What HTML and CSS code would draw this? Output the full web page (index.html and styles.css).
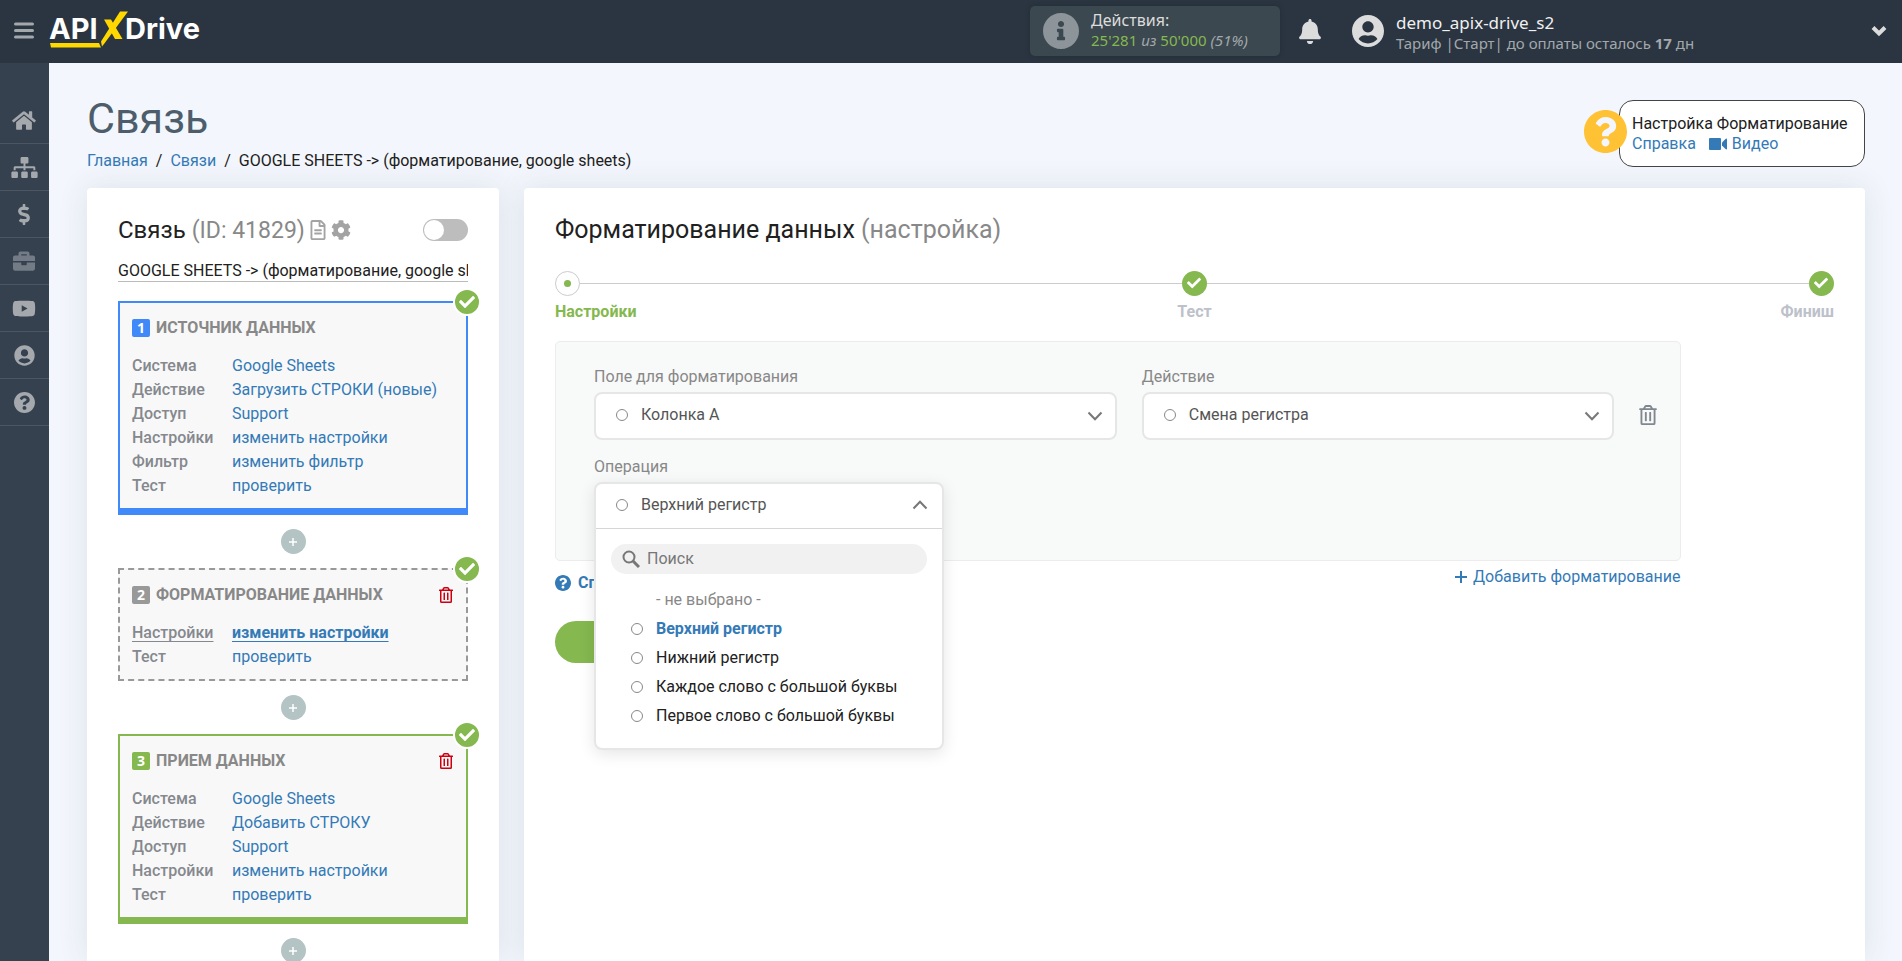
FILE: index.html
```html
<!DOCTYPE html>
<html lang="ru">
<head>
<meta charset="utf-8">
<meta name="viewport" content="width=device-width, initial-scale=1">
<title>Связь</title>
<link rel="stylesheet" href="styles.css">
</head>
<body>
<svg class="sprite" aria-hidden="true">
  <symbol id="i-user" viewBox="0 0 496 512"><path d="M248 8C111 8 0 119 0 256s111 248 248 248 248-111 248-248S385 8 248 8zm0 96c48.600 0 88 39.400 88 88s-39.400 88-88 88-88-39.400-88-88 39.400-88 88-88zm0 344c-58.700 0-111.300-26.600-146.500-68.200 18.800-35.400 55.600-59.800 98.500-59.800 2.400 0 4.800.4 7.100 1.100 13 4.200 26.600 6.900 40.900 6.900 14.300 0 28-2.700 40.900-6.900 2.300-.7 4.700-1.100 7.100-1.100 42.900 0 79.700 24.400 98.500 59.800C359.300 421.400 306.700 448 248 448z"/></symbol>
  <symbol id="i-question" viewBox="8 8 496 496"><path d="M504 256c0 136.997-111.043 248-248 248S8 392.997 8 256C8 119.083 119.043 8 256 8s248 111.083 248 248zM262.655 90c-54.497 0-89.255 22.957-116.549 63.758-3.536 5.286-2.353 12.415 2.715 16.258l34.699 26.310c5.205 3.947 12.621 3.008 16.665-2.122 17.864-22.658 30.113-35.797 57.303-35.797 20.429 0 45.698 13.148 45.698 32.958 0 14.976-12.363 22.667-32.534 33.976C247.128 238.528 216 254.941 216 296v4c0 6.627 5.373 12 12 12h56c6.627 0 12-5.373 12-12v-1.333c0-28.462 83.186-29.647 83.186-106.667 0-58.002-60.165-102-116.531-102zM256 338c-25.365 0-46 20.635-46 46 0 25.364 20.635 46 46 46s46-20.636 46-46c0-25.365-20.635-46-46-46z"/></symbol>
  <symbol id="i-info" viewBox="8 8 496 496"><path d="M256 8C119.043 8 8 119.083 8 256c0 136.997 111.043 248 248 248s248-111.003 248-248C504 119.083 392.957 8 256 8zm0 110c23.196 0 42 18.804 42 42s-18.804 42-42 42-42-18.804-42-42 18.804-42 42-42zm56 254c0 6.627-5.373 12-12 12h-88c-6.627 0-12-5.373-12-12v-24c0-6.627 5.373-12 12-12h12v-64h-12c-6.627 0-12-5.373-12-12v-24c0-6.627 5.373-12 12-12h64c6.627 0 12 5.373 12 12v100h12c6.627 0 12 5.373 12 12v24z"/></symbol>
  <symbol id="i-bell" viewBox="0 0 448 512"><path d="M224 512c35.320 0 63.970-28.650 63.970-64H160.030c0 35.350 28.650 64 63.970 64zm215.390-149.710c-19.320-20.760-55.470-51.990-55.470-154.290 0-77.700-54.480-139.900-127.940-155.160V32c0-17.670-14.320-32-31.980-32s-31.980 14.330-31.980 32v20.840C118.560 68.100 64.080 130.300 64.080 208c0 102.300-36.150 133.530-55.470 154.290-6 6.450-8.660 14.160-8.610 21.710.11 16.400 12.980 32 32.100 32h383.800c19.120 0 32-15.600 32.100-32 .05-7.550-2.610-15.270-8.610-21.710z"/></symbol>
  <symbol id="i-home" viewBox="0 0 576 512"><path d="M280.370 148.260L96 300.110V464a16 16 0 0 0 16 16l112.060-.29a16 16 0 0 0 15.920-16V368a16 16 0 0 1 16-16h64a16 16 0 0 1 16 16v95.640a16 16 0 0 0 16 16.050L464 480a16 16 0 0 0 16-16V300L295.670 148.260a12.190 12.190 0 0 0-15.300 0zM571.600 251.470L488 182.560V44.050a12 12 0 0 0-12-12h-56a12 12 0 0 0-12 12v72.610L318.470 43a48 48 0 0 0-61 0L4.340 251.470a12 12 0 0 0-1.600 16.900l25.500 31A12 12 0 0 0 45.150 301l235.220-193.740a12.190 12.190 0 0 1 15.300 0L530.900 301a12 12 0 0 0 16.900-1.600l25.500-31a12 12 0 0 0-1.700-16.930z"/></symbol>
  <symbol id="i-sitemap" viewBox="0 0 640 512"><path d="M128 352H32c-17.670 0-32 14.330-32 32v96c0 17.670 14.330 32 32 32h96c17.670 0 32-14.330 32-32v-96c0-17.670-14.330-32-32-32zm-24-80h192v48h48v-48h192v48h48v-57.590c0-21.170-17.230-38.410-38.410-38.410H344v-64h40c17.670 0 32-14.330 32-32V32c0-17.670-14.330-32-32-32H256c-17.670 0-32 14.330-32 32v96c0 17.670 14.330 32 32 32h40v64H94.410C73.230 224 56 241.230 56 262.410V320h48v-48zm264 80h-96c-17.670 0-32 14.330-32 32v96c0 17.670 14.330 32 32 32h96c17.670 0 32-14.330 32-32v-96c0-17.670-14.330-32-32-32zm240 0h-96c-17.670 0-32 14.330-32 32v96c0 17.670 14.330 32 32 32h96c17.670 0 32-14.330 32-32v-96c0-17.670-14.330-32-32-32z"/></symbol>
  <symbol id="i-dollar" viewBox="0 0 288 512"><path d="M209.200 233.400l-108-31.600C88.700 198.200 80 186.500 80 173.500c0-16.300 13.200-29.500 29.500-29.500h66.300c12.200 0 24.200 3.700 34.200 10.500 6.100 4.100 14.300 3.100 19.500-2l34.800-34c7.100-6.900 6.100-18.400-1.800-24.500C238 74.800 207.400 64.100 176 64V16c0-8.800-7.200-16-16-16h-32c-8.800 0-16 7.200-16 16v48h-2.500C45.800 64-5.400 118.700.5 183.600c4.200 46.100 39.400 83.600 83.800 96.600l102.500 30c12.500 3.700 21.200 15.300 21.200 28.300 0 16.300-13.200 29.500-29.500 29.500h-66.300C100 368 88 364.300 78 357.500c-6.100-4.100-14.300-3.100-19.500 2l-34.800 34c-7.100 6.900-6.100 18.400 1.800 24.500 24.500 19.200 55.100 29.900 86.500 30v48c0 8.800 7.200 16 16 16h32c8.800 0 16-7.200 16-16v-48.200c46.600-.9 90.300-28.600 105.700-72.700 21.500-61.600-14.600-124.800-72.500-141.700z"/></symbol>
  <symbol id="i-briefcase" viewBox="0 0 512 512"><path d="M320 336c0 8.840-7.160 16-16 16h-96c-8.840 0-16-7.160-16-16v-48H0v144c0 25.600 22.400 48 48 48h416c25.600 0 48-22.400 48-48V288H320v48zm144-208h-80V80c0-25.600-22.400-48-48-48H176c-25.600 0-48 22.400-48 48v48H48c-25.600 0-48 22.400-48 48v80h512v-80c0-25.600-22.400-48-48-48zm-144 0H192V96h128v32z"/></symbol>
  <symbol id="i-youtube" viewBox="0 0 576 512"><path d="M549.655 124.083c-6.281-23.650-24.787-42.276-48.284-48.597C458.781 64 288 64 288 64S117.220 64 74.629 75.486c-23.497 6.322-42.003 24.947-48.284 48.597-11.412 42.867-11.412 132.305-11.412 132.305s0 89.438 11.412 132.305c6.281 23.650 24.787 41.500 48.284 47.821C117.220 448 288 448 288 448s170.780 0 213.371-11.486c23.497-6.321 42.003-24.171 48.284-47.821 11.412-42.867 11.412-132.305 11.412-132.305s0-89.438-11.412-132.305zm-317.510 213.508V175.185l142.739 81.205-142.739 81.201z"/></symbol>
  <symbol id="i-cog" viewBox="0 0 512 512"><path d="M487.400 315.700l-42.600-24.600c4.300-23.200 4.300-47 0-70.200l42.600-24.600c4.900-2.800 7.100-8.600 5.500-14-11.100-35.600-30-67.800-54.700-94.600-3.800-4.100-10-5.100-14.800-2.300L380.800 110c-17.900-15.400-38.500-27.300-60.800-35.100V25.800c0-5.600-3.900-10.500-9.400-11.700-36.700-8.200-74.300-7.800-109.200 0-5.500 1.200-9.400 6.100-9.400 11.700V75c-22.200 7.900-42.800 19.800-60.800 35.100L88.700 85.500c-4.900-2.800-11-1.900-14.800 2.300-24.700 26.700-43.600 58.900-54.700 94.600-1.700 5.400.6 11.200 5.500 14L67.300 221c-4.300 23.200-4.300 47 0 70.200l-42.600 24.600c-4.900 2.800-7.100 8.600-5.500 14 11.100 35.600 30 67.800 54.700 94.600 3.800 4.100 10 5.100 14.800 2.300l42.600-24.600c17.900 15.400 38.500 27.300 60.800 35.100v49.200c0 5.600 3.900 10.500 9.400 11.700 36.700 8.200 74.300 7.800 109.200 0 5.500-1.200 9.400-6.100 9.400-11.700v-49.200c22.200-7.900 42.800-19.800 60.800-35.100l42.600 24.600c4.900 2.800 11 1.900 14.800-2.300 24.700-26.700 43.600-58.900 54.700-94.600 1.500-5.500-.7-11.300-5.600-14.100zM256 336c-44.100 0-80-35.900-80-80s35.900-80 80-80 80 35.900 80 80-35.900 80-80 80z"/></symbol>
  <symbol id="i-file" viewBox="0 0 384 512"><path d="M288 248v28c0 6.600-5.400 12-12 12H108c-6.600 0-12-5.400-12-12v-28c0-6.600 5.400-12 12-12h168c6.600 0 12 5.400 12 12zm-12 72H108c-6.600 0-12 5.400-12 12v28c0 6.600 5.400 12 12 12h168c6.600 0 12-5.400 12-12v-28c0-6.600-5.400-12-12-12zm108-188.100V464c0 26.500-21.500 48-48 48H48c-26.500 0-48-21.500-48-48V48C0 21.500 21.500 0 48 0h204.100C264.800 0 277 5.100 286 14.100L369.900 98c9 8.900 14.100 21.200 14.100 33.900zm-128-80V128h76.100L256 51.900zM336 464V176H232c-13.300 0-24-10.700-24-24V48H48v416h288z"/></symbol>
  <symbol id="i-trash" viewBox="0 0 448 512"><path d="M268 416h24a12 12 0 0 0 12-12V188a12 12 0 0 0-12-12h-24a12 12 0 0 0-12 12v216a12 12 0 0 0 12 12zM432 80h-82.410l-34-56.700A48 48 0 0 0 274.410 0H173.590a48 48 0 0 0-41.160 23.300L98.410 80H16A16 16 0 0 0 0 96v16a16 16 0 0 0 16 16h16v336a48 48 0 0 0 48 48h288a48 48 0 0 0 48-48V128h16a16 16 0 0 0 16-16V96a16 16 0 0 0-16-16zM171.840 50.910A6 6 0 0 1 177 48h94a6 6 0 0 1 5.150 2.910L293.610 80H154.390zM368 464H80V128h288zm-212-48h24a12 12 0 0 0 12-12V188a12 12 0 0 0-12-12h-24a12 12 0 0 0-12 12v216a12 12 0 0 0 12 12z"/></symbol>
  <symbol id="i-check" viewBox="0 0 512 512"><path d="M173.898 439.404l-166.400-166.400c-9.997-9.997-9.997-26.206 0-36.204l36.203-36.204c9.997-9.998 26.207-9.998 36.204 0L192 312.690 432.095 72.596c9.997-9.997 26.207-9.997 36.204 0l36.203 36.204c9.997 9.997 9.997 26.206 0 36.204l-294.400 294.401c-9.998 9.997-26.207 9.997-36.204-.001z"/></symbol>
  <symbol id="i-down" viewBox="0 0 16 10"><path d="M1.500 1.500L8 8.200l6.500-6.700" fill="none" stroke="currentColor" stroke-width="2"/></symbol>
  <symbol id="i-up" viewBox="0 0 16 10"><path d="M1.500 8.500L8 1.800l6.500 6.700" fill="none" stroke="currentColor" stroke-width="2"/></symbol>
  <symbol id="i-plus" viewBox="0 0 12 12"><path d="M6 0v12M0 6h12" fill="none" stroke="currentColor" stroke-width="2"/></symbol>
</svg>

<header class="topbar">
  <button class="icon-button burger" aria-label="Меню"><svg width="20" height="18" viewBox="0 0 20 18"><path d="M1.500 2h17M1.500 8.500h17M1.500 15h17" fill="none" stroke="currentColor" stroke-width="3" stroke-linecap="round"/></svg></button>
  <a class="logo" href="#" aria-label="APIXDrive">
    <svg width="156" height="40" viewBox="0 0 156 40">
      <text class="logo-text" x="0" y="28">API</text>
      <text class="logo-text" x="76" y="28">Drive</text>
      <path d="M1 32h49l2 4.500H2z" fill="#ffd800"/>
      <path d="M71 .5h8L55 33l-2 2.500-1-5z" fill="#ffd800"/>
      <path d="M55 8.500h7L73.500 28H66z" fill="#ffd800"/>
    </svg>
  </a>
  <div class="usage">
    <svg class="usage-icon"><use href="#i-info"/></svg>
    <div class="bar-text">
      <div class="usage-title">Действия:</div>
      <div class="usage-count"><span class="green">25'281</span> <i>из</i> <span class="green">50'000</span> <i>(51%)</i></div>
    </div>
  </div>
  <button class="icon-button bell" aria-label="Уведомления"><svg width="22" height="25"><use href="#i-bell"/></svg></button>
  <div class="account">
    <svg class="account-icon"><use href="#i-user"/></svg>
    <div class="account-text">
      <div class="account-name">demo_apix-drive_s2</div>
      <div class="account-plan">Тариф |Старт| до оплаты осталось <b>17</b> дн</div>
    </div>
  </div>
  <button class="icon-button more" aria-label="Ещё"><svg width="16" height="12" viewBox="0 0 16 12"><path d="M2 2.500l6 6 6-6" fill="none" stroke="currentColor" stroke-width="4"/></svg></button>
</header>

<div class="shell">
  <nav class="sidebar" aria-label="Разделы">
    <a class="side-link" href="#" aria-label="Главная"><svg width="24" height="21"><use href="#i-home"/></svg></a>
    <a class="side-link" href="#" aria-label="Связи"><svg width="27" height="21"><use href="#i-sitemap"/></svg></a>
    <a class="side-link" href="#" aria-label="Оплата"><svg width="22" height="21"><use href="#i-dollar"/></svg></a>
    <a class="side-link dim" href="#" aria-label="Работа"><svg width="22" height="22"><use href="#i-briefcase"/></svg></a>
    <a class="side-link" href="#" aria-label="Видео"><svg width="24" height="21"><use href="#i-youtube"/></svg></a>
    <a class="side-link" href="#" aria-label="Профиль"><svg width="21" height="21"><use href="#i-user"/></svg></a>
    <a class="side-link" href="#" aria-label="Помощь"><svg width="21" height="21"><use href="#i-question"/></svg></a>
  </nav>

  <main class="page">
    <div class="page-head">
      <div>
        <h1>Связь</h1>
        <nav class="crumbs" aria-label="Путь">
          <a href="#">Главная</a><span>/</span><a href="#">Связи</a><span>/</span>GOOGLE SHEETS -&gt; (форматирование, google sheets)
        </nav>
      </div>
      <aside class="help">
        <svg class="help-icon"><use href="#i-question"/></svg>
        <div>Настройка Форматирование</div>
        <div class="help-links">
          <a href="#">Справка</a>
          <a class="video" href="#"><svg width="18" height="12" viewBox="0 0 18 12"><rect width="12" height="12" rx="1"/><path d="M13 4.500L16.500 1q1.500-1 1.500.5v9q0 1.500-1.500.5L13 7.500z"/></svg>Видео</a>
        </div>
      </aside>
    </div>

    <div class="columns">
      <section class="card flow">
        <div class="flow-head">
          <h2>Связь <span>(ID: 41829)</span></h2>
          <button class="icon-button grey" aria-label="Журнал"><svg width="16" height="20"><use href="#i-file"/></svg></button>
          <button class="icon-button grey" aria-label="Настройки связи"><svg width="20" height="20"><use href="#i-cog"/></svg></button>
          <input class="toggle" type="checkbox" role="switch" aria-label="Включить связь">
        </div>
        <input class="flow-name" type="text" aria-label="Название связи" value="GOOGLE SHEETS -&gt; (форматирование, google sheets)">

        <article class="step step-source">
          <span class="done"><svg><use href="#i-check"/></svg></span>
          <div class="step-head"><span class="num">1</span><h3>ИСТОЧНИК ДАННЫХ</h3></div>
          <dl>
            <dt>Система</dt><dd><a href="#">Google Sheets</a></dd>
            <dt>Действие</dt><dd><a href="#">Загрузить СТРОКИ (новые)</a></dd>
            <dt>Доступ</dt><dd><a href="#">Support</a></dd>
            <dt>Настройки</dt><dd><a href="#">изменить настройки</a></dd>
            <dt>Фильтр</dt><dd><a href="#">изменить фильтр</a></dd>
            <dt>Тест</dt><dd><a href="#">проверить</a></dd>
          </dl>
        </article>
        <button class="add" aria-label="Добавить шаг"><svg width="8" height="8" viewBox="0 0 8 8"><path d="M4 0v8M0 4h8" stroke="currentColor" stroke-width="1.500"/></svg></button>
        <article class="step step-format">
          <span class="done"><svg><use href="#i-check"/></svg></span>
          <div class="step-head"><span class="num">2</span><h3>ФОРМАТИРОВАНИЕ ДАННЫХ</h3><button class="icon-button remove" aria-label="Удалить"><svg width="14" height="16"><use href="#i-trash"/></svg></button></div>
          <dl>
            <dt class="current">Настройки</dt><dd class="current"><a href="#">изменить настройки</a></dd>
            <dt>Тест</dt><dd><a href="#">проверить</a></dd>
          </dl>
        </article>
        <button class="add" aria-label="Добавить шаг"><svg width="8" height="8" viewBox="0 0 8 8"><path d="M4 0v8M0 4h8" stroke="currentColor" stroke-width="1.500"/></svg></button>
        <article class="step step-target">
          <span class="done"><svg><use href="#i-check"/></svg></span>
          <div class="step-head"><span class="num">3</span><h3>ПРИЕМ ДАННЫХ</h3><button class="icon-button remove" aria-label="Удалить"><svg width="14" height="16"><use href="#i-trash"/></svg></button></div>
          <dl>
            <dt>Система</dt><dd><a href="#">Google Sheets</a></dd>
            <dt>Действие</dt><dd><a href="#">Добавить СТРОКУ</a></dd>
            <dt>Доступ</dt><dd><a href="#">Support</a></dd>
            <dt>Настройки</dt><dd><a href="#">изменить настройки</a></dd>
            <dt>Тест</dt><dd><a href="#">проверить</a></dd>
          </dl>
        </article>
        <button class="add" aria-label="Добавить шаг"><svg width="8" height="8" viewBox="0 0 8 8"><path d="M4 0v8M0 4h8" stroke="currentColor" stroke-width="1.500"/></svg></button>
      </section>

      <section class="card setup">
        <h2>Форматирование данных <span>(настройка)</span></h2>
        <ol class="progress">
          <li class="active"><span class="dot"></span>Настройки</li>
          <li><span class="dot"><svg><use href="#i-check"/></svg></span>Тест</li>
          <li><span class="dot"><svg><use href="#i-check"/></svg></span>Финиш</li>
        </ol>

        <form class="format">
          <div class="panel">
            <div class="fields">
              <div class="field field-source">
                <label for="source">Поле для форматирования</label>
                <div class="select">
                  <span class="ring"></span>
                  <select id="source"><option>Колонка A</option></select>
                  <svg class="arrow"><use href="#i-down"/></svg>
                </div>
              </div>
              <div class="field field-action">
                <label for="action">Действие</label>
                <div class="select">
                  <span class="ring"></span>
                  <select id="action"><option>Смена регистра</option></select>
                  <svg class="arrow"><use href="#i-down"/></svg>
                </div>
              </div>
              <button type="button" class="icon-button clear" aria-label="Удалить форматирование"><svg width="18" height="20"><use href="#i-trash"/></svg></button>
            </div>
            <div class="field operation">
              <label for="operation">Операция</label>
              <div class="combo">
                <div class="popup">
                  <button type="button" id="operation" class="popup-head" aria-expanded="true"><span class="ring"></span>Верхний регистр<svg class="arrow"><use href="#i-up"/></svg></button>
                  <div class="popup-body">
                    <div class="search">
                      <svg width="18" height="18" viewBox="0 0 18 18"><circle cx="7" cy="7" r="5.500" fill="none" stroke="currentColor" stroke-width="2"/><path d="M11 11l6 6" stroke="currentColor" stroke-width="3"/></svg>
                      <input type="text" placeholder="Поиск" aria-label="Поиск">
                    </div>
                    <ul role="listbox" aria-label="Операция">
                      <li class="none" role="option">- не выбрано -</li>
                      <li class="chosen" role="option" aria-selected="true"><span class="ring"></span>Верхний регистр</li>
                      <li role="option"><span class="ring"></span>Нижний регистр</li>
                      <li role="option"><span class="ring"></span>Каждое слово с большой буквы</li>
                      <li role="option"><span class="ring"></span>Первое слово с большой буквы</li>
                    </ul>
                  </div>
                </div>
              </div>
            </div>
          </div>
          <div class="format-links">
            <a class="manual" href="#"><svg width="16" height="16"><use href="#i-question"/></svg>Справка</a>
            <a class="append" href="#"><svg width="12" height="12"><use href="#i-plus"/></svg>Добавить форматирование</a>
          </div>
          <button type="button" class="next">Далее</button>
        </form>
      </section>
    </div>
  </main>
</div>
</body>
</html>
```

FILE: styles.css
```css
* { box-sizing: border-box; }

body {
  margin: 0;
  height: 100vh;
  display: flex;
  flex-direction: column;
  overflow: hidden;
  background: #f3f6fc;
  color: #212121;
  font: 16px/24px Roboto, sans-serif;
}

svg { fill: currentColor; flex: none; }
.sprite { display: none; }
a { color: #337ab7; text-decoration: none; }
h1, h2, h3, ol, ul, dl, dd { margin: 0; padding: 0; font-weight: 400; }
ol, ul { list-style: none; }
button, input, select { font: inherit; color: inherit; margin: 0; }
.icon-button { display: flex; padding: 0; border: 0; background: none; cursor: pointer; }

/* Top bar */
.topbar {
  flex: none;
  display: flex;
  align-items: center;
  height: 63px;
  padding: 0 15px 1px 14px;
  background: #2a3541;
  color: #dcdcdc;
  font-family: "Noto Sans", sans-serif;
}
.burger { color: #a3a8ac; }
.logo { display: flex; margin: 0 auto 0 15px; }
.logo-text { fill: #fff; font: 700 29px Inter, sans-serif; }
.usage {
  display: flex;
  align-items: center;
  gap: 12px;
  width: 250px;
  height: 50px;
  padding-left: 13px;
  border-radius: 5px;
  background: #3b484f;
  box-shadow: 0 0 4px #232d36;
}
.usage-icon { width: 36px; height: 36px; color: #8d949a; }
.bar-text { padding-bottom: 2px; }
.usage-title { font-size: 16px; line-height: 20px; }
.usage-count { font-size: 15px; line-height: 20px; color: #a3a8ac; }
.green { color: #85b84f; }
.bell { margin-left: 19px; }
.account { display: flex; align-items: center; gap: 12px; width: 505px; margin-left: 31px; }
.account-icon { width: 32px; height: 34px; }
.account-name { font-size: 17px; line-height: 20px; color: #f0f0f0; }
.account-plan { font-size: 15px; line-height: 20px; color: #a3a8ac; }
.account-text { padding-top: 4px; }
.more { margin-left: 14px; }

/* Sidebar */
.shell { flex: 1; display: flex; min-height: 0; }
.sidebar { flex: none; width: 49px; padding-top: 34px; background: #36414f; }
.side-link {
  display: flex;
  align-items: center;
  justify-content: center;
  height: 47px;
  padding-right: 1px;
  border-bottom: 1px solid #4c5663;
  color: #a5a9ae;
}
.dim { color: #737c86; }

/* Page */
.page { flex: 1; display: flex; flex-direction: column; min-width: 0; padding: 30px 37px 0 38px; }
.page-head { display: flex; justify-content: space-between; height: 95px; flex: none; }
h1 { font-size: 43px; line-height: 50px; color: #4d5d6b; }
.crumbs { margin-top: 6px; white-space: nowrap; }
.crumbs span { margin: 0 8px; }
.help {
  position: relative;
  min-width: 246px;
  height: 67px;
  margin-top: 7px;
  padding: 13px 12px 0;
  border: 1px solid #444;
  border-radius: 14px;
  background: #fff;
  line-height: 20px;
}
.help-icon { position: absolute; left: -36px; top: 9px; width: 43px; height: 43px; color: #ffc235; }
.help-links { display: flex; gap: 13px; }
.video { display: flex; align-items: center; gap: 5px; }

.columns { flex: 1; display: flex; gap: 25px; min-height: 0; }
.card {
  padding: 30px 31px;
  border-radius: 4px 4px 0 0;
  background: #fff;
  box-shadow: 0 0 30px rgba(60, 80, 110, 0.12);
}
h2 { font-size: 25px; line-height: 24px; white-space: nowrap; }
h2 span { color: #888; }

/* Flow column */
.flow { flex: none; width: 412px; }
.flow-head { display: flex; align-items: center; gap: 5px; height: 24px; }
.flow-head h2 { font-size: 24px; }
.flow-head h2 span { font-size: 23px; }
.grey { color: #a3a3a3; }
.toggle {
  appearance: none;
  width: 45px;
  height: 22px;
  margin-left: auto;
  padding: 1px;
  border-radius: 11px;
  background: #bdbdbd;
}
.toggle::before { content: ""; display: block; width: 20px; height: 20px; border-radius: 50%; background: #fff; }
.flow-name {
  display: block;
  width: 100%;
  height: 24px;
  margin: 16px 0 19px;
  padding: 2px 0 0;
  border: 0;
  border-bottom: 1px solid #bbb;
  background: none;
}
.step {
  position: relative;
  padding: 13px 13px 10px 12px;
  border: 2px solid;
  background: #f8f8f8;
}
.step-source { border-color: #3f8af8; border-bottom-width: 7px; }
.step-format { border-color: #999; border-style: dashed; }
.step-target { border-color: #85b84f; border-bottom-width: 7px; }
.done {
  position: absolute;
  top: -15px;
  right: -15px;
  display: flex;
  align-items: center;
  justify-content: center;
  width: 28px;
  height: 28px;
  border: 2px solid #fff;
  border-radius: 50%;
  background: #85b84f;
  color: #fff;
}
.done svg { width: 16px; height: 16px; }
.step-head { display: flex; align-items: center; gap: 6px; height: 24px; margin-bottom: 14px; color: #888; }
.num {
  width: 18px;
  height: 18px;
  border-radius: 2px;
  color: #fff;
  font: 700 14px/18px "Noto Sans", sans-serif;
  text-align: center;
}
.step-source .num { background: #3f8af8; }
.step-format .num { background: #999; }
.step-target .num { background: #85b84f; }
h3 { font-size: 16px; font-weight: 700; }
.remove { margin-left: auto; color: #cc0010; }
dl { display: grid; grid-template-columns: 100px 1fr; }
dt { color: #85888e; font-weight: 500; }
dt.current { text-decoration: underline; text-underline-offset: 3px; }
dd.current a { text-decoration: underline; text-underline-offset: 3px; font-weight: 700; }
.add {
  display: flex;
  align-items: center;
  justify-content: center;
  width: 25px;
  height: 25px;
  margin: 14px auto;
  padding: 0;
  border: 0;
  border-radius: 50%;
  background: #b4c3c3;
  color: #fff;
}

/* Setup column */
.setup { flex: 1; min-width: 0; }
.progress {
  position: relative;
  display: flex;
  justify-content: space-between;
  margin: 29px 0 17px;
  color: #bcc1ca;
  font-weight: 700;
}
.progress::before { content: ""; position: absolute; top: 12px; left: 0; right: 0; height: 1px; background: #ccc; }
.progress li { position: relative; flex: 1; display: flex; flex-direction: column; gap: 4px; align-items: center; }
.progress li:first-child { align-items: flex-start; }
.progress li:last-child { align-items: flex-end; }
.progress .active { color: #85b84f; }
.dot {
  display: flex;
  align-items: center;
  justify-content: center;
  width: 25px;
  height: 25px;
  padding-bottom: 2px;
  border-radius: 50%;
  background: #85b84f;
  color: #fff;
}
.dot svg { width: 14px; height: 14px; }
.active .dot { padding: 0; border: 1px solid #ccc; background: #fff; }
.active .dot::before { content: ""; width: 7px; height: 7px; border-radius: 50%; background: #85b84f; }

.format { width: 88%; }
.panel {
  padding: 23px 23px 30px 38px;
  border: 1px solid #ececec;
  border-radius: 5px;
  background: #f8f9f9;
}
.fields { display: flex; align-items: flex-end; gap: 25px; }
.field label { display: block; height: 27px; color: #888; }
.field-source { flex: 522; }
.field-action { flex: 471; }
.select { position: relative; }
.select select {
  display: block;
  appearance: none;
  width: 100%;
  height: 48px;
  padding: 0 44px 2px 45px;
  border: 2px solid #e6e6e6;
  border-radius: 8px;
  background: #fff;
  color: #555;
}
.ring { flex: none; width: 12px; height: 12px; border: 1px solid #888; border-radius: 50%; }
.select .ring { position: absolute; top: 17px; left: 22px; }
.arrow { width: 16px; height: 10px; color: #777; }
.select .arrow { position: absolute; top: 19px; right: 14px; }
.clear { margin-bottom: 15px; color: #808791; }
.operation { margin-top: 15px; }
.combo { position: relative; width: 350px; height: 48px; }
.popup {
  position: absolute;
  top: 0;
  left: 0;
  right: 0;
  z-index: 1;
  border: 2px solid #e6e6e6;
  border-radius: 8px;
  background: #fff;
  box-shadow: 0 4px 16px rgba(0, 0, 0, 0.1);
}
.popup-head {
  display: flex;
  align-items: center;
  width: 100%;
  height: 45px;
  padding: 0 14px 2px 20px;
  border: 0;
  border-bottom: 1px solid #d6d6d6;
  background: none;
  color: #555;
}
.popup-head .ring { margin-right: 13px; }
.popup-head .arrow { margin-left: auto; }
.popup-body { padding: 15px 15px 18px; }
.search {
  display: flex;
  align-items: center;
  gap: 7px;
  height: 30px;
  padding: 0 11px;
  border-radius: 15px;
  background: #f1f1f1;
  color: #777;
}
.search input { flex: 1; min-width: 0; padding: 0; border: 0; background: none; }
.search input::placeholder { color: #777; }
.popup ul { padding: 11px 0 0 20px; }
.popup li { display: flex; align-items: center; gap: 13px; line-height: 29px; white-space: nowrap; }
.popup .none { padding-left: 25px; color: #888; }
.popup .chosen { color: #337ab7; font-weight: 700; }

.format-links { display: flex; align-items: flex-start; justify-content: space-between; margin-top: 4px; }
.manual, .append { display: flex; align-items: center; gap: 7px; }
.manual { padding-top: 6px; font-weight: 700; }
.append { gap: 6px; }
.next {
  display: block;
  width: 300px;
  height: 42px;
  margin-top: 26px;
  border: 0;
  border-radius: 21px;
  background: #85b84f;
  color: #fff;
}
```
